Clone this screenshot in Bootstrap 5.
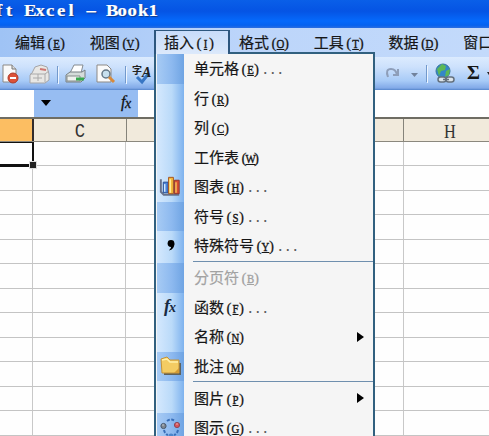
<!DOCTYPE html>
<html lang="zh-CN">
<head>
<meta charset="utf-8">
<title>Microsoft Excel - Book1</title>
<link href="https://cdn.jsdelivr.net/npm/bootstrap@5.3.0/dist/css/bootstrap.min.css" rel="stylesheet">
<style>
body{margin:0;width:489px;height:436px;overflow:hidden;background:#fefefe;font:15px/20px "Noto Sans CJK SC",sans-serif;color:#161616;-webkit-text-stroke:.2px}
.app{width:489px;height:436px}
.titlebar{height:28px;background:linear-gradient(#0a5fe8 0,#0554e4 40%,#0569fb 75%,#0562f0 90%,#2c6ee0);color:#fff;line-height:22px;text-shadow:1px 1px 1px #123a86}
.titlebar span{font-family:"Liberation Serif",serif;font-weight:bold;font-size:17px;display:flex;justify-content:center;flex:none;width:10.25px;transform:scaleX(1.1);-webkit-text-stroke:.2px}
.titlebar span:first-child{margin-left:-6px}
.menubar{height:29px;background:linear-gradient(90deg,#9fc3f5,#bcd5fa 50%,#c3dafb);gap:22.2px;padding-left:15px}
.menubar>div{width:52.5px;line-height:27px;flex:none;white-space:nowrap}
.hot{font:15px/16px "Liberation Serif",serif;display:inline-flex;align-items:baseline}
.hot i{display:block;width:7.5px;font-style:normal;text-align:right}
.hot i:nth-of-type(2){text-align:left}
.hot u{display:block;width:13px;margin:0 -2.75px;text-align:center;transform:scaleX(.8);font-size:13.5px;line-height:12px;text-decoration:underline;text-underline-offset:1px;-webkit-text-stroke:.4px}
.dots{font:12.5px "Liberation Mono",monospace;color:#555}
.toolbar{height:33px;background:linear-gradient(#dcebfe 0,#cde1fc 30%,#a8cbf7 72%,#82aae8 94%,#5585cb)}
.toolbar svg,.drop svg{display:block;flex:none}
.formula{height:27px;background:#fff}
.namebox{width:34px;background:#fff}
.fxarea{width:104px;background:#97bdf2}
.heads{height:25px;flex:none;background:#f1eadc;border-top:2px solid #6f6d63;border-bottom:1px solid #8b887e;font:20px/25px "Liberation Mono",monospace}
.heads>div{width:92.5px;flex:none;border-right:1px solid #85837a;text-align:center;color:#333}
.heads>.picked{width:34px;background:#fcbe62;border-right:2px solid #322b2b}
.heads span{display:inline-block;transform:scaleX(.86);-webkit-text-stroke:0}
.heads .serif-head{font-family:"Liberation Serif",serif;font-size:19px}
.sheet{flex:1;background:repeating-linear-gradient(transparent 0 23px,#c4c4c4 23px 24px,transparent 24px 48px,#c4c4c4 48px 49px),linear-gradient(90deg,transparent 32px,#c8c8c8 32px 33px,transparent 33px 125px,#c8c8c8 125px 126px,transparent 126px 403px,#c8c8c8 403px 404px,transparent 404px)}
.active-cell{width:34px;height:25px;background:#fff;border:solid #111;border-width:1px 2.5px 3px 0}
.knob{width:6px;height:6px;right:-4px;bottom:-4px;background:#222;outline:1px solid #ddd}
.open-tab{left:154px;top:30px;width:76px;height:24px;background:linear-gradient(#c8dcfa,#dce9fb);border:2px solid #2d567e;border-width:1.5px 2px 0 2px;padding-left:8px;line-height:21px;z-index:3;white-space:nowrap}
.drop{left:154px;top:52px;width:220.5px;height:400px;background:#f5f5f5;border:2px solid #31607f;z-index:2}
.entry{height:29.5px}
.gutter{width:27px;margin-left:1px;flex:none;background:linear-gradient(90deg,#d4e8fd,#badaf9 55%,#7eb2ee);align-self:stretch}
.gutter.deep{background:linear-gradient(90deg,#a7cbf4,#8db9ef 55%,#6fa4e3)}
.label{padding-left:10px;flex:1;white-space:nowrap;margin-top:-1px}
.ruled{height:2.5px}
.ruled hr{margin:0 0 0 9px;flex:1;border:0;border-top:1.5px solid #6f8fae;opacity:1}
.off,.off .dots{color:#a2a2a2}
.arrow{width:0;height:0;border:5.5px solid transparent;border-left:7px solid #000;border-right:0;margin-right:9px}
</style>
<script src="https://cdn.jsdelivr.net/npm/bootstrap@5.3.0/dist/js/bootstrap.bundle.min.js"></script>
</head>
<body>
<div class="app d-flex flex-column position-relative overflow-hidden">
 <header class="titlebar d-flex flex-shrink-0" id="title"></header>
 <nav class="menubar d-flex flex-shrink-0">
  <div>编辑<span class="hot"><i>(</i><u>E</u><i>)</i></span></div>
  <div>视图<span class="hot"><i>(</i><u>V</u><i>)</i></span></div>
  <div></div>
  <div>格式<span class="hot"><i>(</i><u>O</u><i>)</i></span></div>
  <div>工具<span class="hot"><i>(</i><u>T</u><i>)</i></span></div>
  <div>数据<span class="hot"><i>(</i><u>D</u><i>)</i></span></div>
  <div>窗口</div>
 </nav>
 <div class="toolbar flex-shrink-0">
  <svg width="489" height="33" viewBox="0 57 489 33">
   <g stroke-linejoin="round">
    <path d="M3 65h9l4 4v13H3z" fill="#fafafa" stroke="#8d8985"/><path d="M12 65v4h4" fill="#ddd" stroke="#777"/>
    <circle cx="13" cy="78" r="5" fill="#dc5138" stroke="#ad3a2b"/><path d="M10 78h6" stroke="#fff" stroke-width="2"/>
    <path d="M32 73l3-6 6-2 6 2 2 7v6l-4 3H30v-8z" fill="#e8e7e4" stroke="#a5a5a8"/><path d="M30 74h15v8M45 74l4-3M33 78h9M38 74v7" fill="none" stroke="#aaa"/><path d="M40 69l6 1" stroke="#ce7772" stroke-width="2"/>
    <path d="M57.5 66v17M125.500 66v17" stroke="#7299cc"/><path d="M58.500 67v17M126.500 67v17" stroke="#edf5ff"/>
    <path d="M70 73l4-8h9l-2 8" fill="#fff" stroke="#858b90"/><path d="M66 75l4-3h12l3-2v8l-4 4H66z" fill="#d5dcda" stroke="#777f82"/><path d="M67 76h13v5H67z" fill="#eef1ed" stroke="#858d8d"/><path d="M76 79h8" stroke="#38a951" stroke-width="3"/>
    <path d="M97 65h10l4 4v13H97z" fill="#fafafa" stroke="#8d8985"/><circle cx="106" cy="74" r="4" fill="#c8e0ee" stroke="#667887" stroke-width="1.500"/><path d="M109 77l5 5" stroke="#d78a3c" stroke-width="3"/>
   </g>
   <path d="M137 77l5 5 7-9" fill="none" stroke="#3876c4" stroke-width="3"/>
   <text x="132" y="74" font-size="10" font-weight="bold" fill="#222">字</text><text x="142" y="77" font-family="Liberation Serif" font-size="14" font-style="italic" font-weight="bold" fill="#222">A</text>
   <path d="M388 77q-3-8 3-8 5 0 6 6M393 75h5v-6" fill="none" stroke="#8e9eb9" stroke-width="2"/>
   <path d="M411 73h7l-3.500 4z" fill="#71829c"/><path d="M426.500 65v17" stroke="#7299cc"/><path d="M427.500 66v17" stroke="#edf5ff"/>
   <circle cx="443" cy="71" r="7" fill="#3387c8" stroke="#38769e"/><path d="M437 69l5-5 4 2-1 4-4 1-2 5zM446 71l4-2-1 6-4 2z" fill="#5cb856"/>
   <g fill="#dce4ea" stroke="#65717e" stroke-width="1.500"><rect x="438" y="77" width="8" height="5" rx="2.500"/><rect x="446" y="77" width="8" height="5" rx="2.500"/><path d="M443 79.500h6"/></g>
   <text x="467" y="79" font-family="Liberation Serif" font-size="18" font-weight="bold" fill="#161616" textLength="13" lengthAdjust="spacingAndGlyphs">Σ</text>
   <path d="M487 72h5l-2.500 4z" fill="#222"/>
  </svg>
 </div>
 <div class="formula d-flex flex-shrink-0">
  <div class="namebox"></div>
  <div class="fxarea"><svg width="104" height="27"><path d="M7 10h10l-5 6z"/><text x="87" y="17" font-family="Liberation Serif" font-size="16" font-style="italic" stroke="#111" stroke-width=".3" fill="#111">f</text><text x="91" y="18" font-family="Liberation Serif" font-size="14" font-style="italic" stroke="#111" stroke-width=".3" fill="#111">x</text></svg></div>
 </div>
 <div class="heads d-flex"><div class="picked"></div><div><span>C</span></div><div></div><div></div><div></div><div><span class="serif-head">H</span></div></div>
 <main class="sheet"><div class="active-cell position-relative"><div class="knob position-absolute"></div></div></main>

 <div class="open-tab position-absolute">插入<span class="hot"><i>(</i><u>I</u><i>)</i></span></div>
 <div class="drop position-absolute" id="menu"></div>
</div>
<script>
document.getElementById('title').innerHTML = [...'ft Excel - Book1'].map(c => `<span>${c === ' ' ? '&nbsp;' : c === '-' ? '–' : c}</span>`).join('');
const chart = '<svg width="27" height="29" viewBox="0 0 28 29"><path d="M4 7v13l3 3h16" fill="none" stroke="#66718b" stroke-width="2"/><path d="M6.500 10h5v11h-5z" fill="#4d83d8" stroke="#294e91"/><path d="M12 5h5v17h-5z" fill="#f3b93c" stroke="#a4521f"/><path d="M18 8h5v14h-5z" fill="#d94c33" stroke="#8e3328"/><path d="M8 12v8" stroke="#cfe9ff" stroke-width="1.500"/><path d="M13.700 7v14" stroke="#fff3a0" stroke-width="1.500"/><path d="M19.700 10v11" stroke="#f5c45a" stroke-width="1.500"/></svg>';
const comma = '<svg width="27" height="29"><circle cx="14" cy="12.500" r="3.400"/><path d="M17.400 12.500q0 6-5.500 7 2.500-2 2.500-5z"/></svg>';
const fx = '<svg width="27" height="29"><g font-family="Liberation Serif" font-style="italic" font-weight="bold" fill="#172a42"><text x="7" y="19" font-size="18">f</text><text x="12" y="19" font-size="14">x</text></g></svg>';
const note = '<svg width="27" height="29"><path d="M7 22h16V11" fill="none" stroke="#60625c" stroke-width="2"/><path d="M4 7l6-2 3 3h9v13H5z" fill="#f4cc63" stroke="#c59336"/><path d="M5 8l5-1 3 3h8" fill="none" stroke="#fff0a9" stroke-width="1.500"/><path d="M17 21l5-5v5z" fill="#d49b35"/></svg>';
const ring = '<svg width="27" height="29"><g fill="none" stroke="#386eb8" stroke-width="2"><path d="M10 8q4-3 8 0M7 17q1 4 4 5M21 17q-1 4-4 5" stroke-dasharray="3 1.500"/></g><circle cx="6.500" cy="13" r="2.600" fill="#7d8792" stroke="#48586c"/><circle cx="20" cy="12" r="2.600" fill="#d9545c" stroke="#8b4658"/><circle cx="14" cy="23" r="2.600" fill="#4c86cb"/><path d="M5.500 12h1M19.500 11h1" stroke="#fff"/></svg>';
const entries = [
 ['单元格','E','...',1],['行','R','',0],['列','C','',0],['工作表','W','',0],['图表','H','...',0,chart],['符号','S','...',1],['特殊符号','Y','...',0,comma],
 null,['分页符','B','',1,'','off'],['函数','F','...',0,fx],['名称','N','',0,'','','sub'],['批注','M','',1,note],
 null,['图片','P','',0,'','','sub'],['图示','G','...',1,ring]];
document.getElementById('menu').innerHTML = entries.map(e => {
 if (!e) return '<div class="ruled d-flex"><div class="gutter"></div><hr></div>';
 const [name, key, dots, deep, icon = '', state = '', sub] = e;
 return `<div class="entry d-flex align-items-center"><div class="gutter ${deep ? 'deep' : ''}">${icon}</div><div class="label ${state}">${name}<span class="hot"><i>(</i><u>${key}</u><i>)</i>${dots ? `<span class="dots">${dots}</span>` : ''}</span></div>${sub ? '<div class="arrow"></div>' : ''}</div>`;
}).join('');
</script>
</body>
</html>
